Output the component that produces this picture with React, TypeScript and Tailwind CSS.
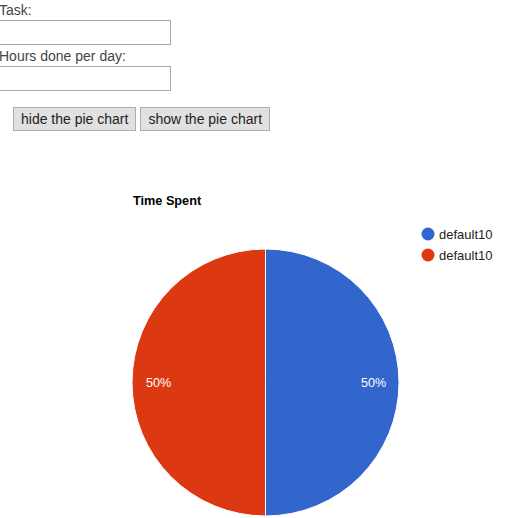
const FONT = "font-['Liberation_Sans',Arial,sans-serif]";
const SVG_FONT = "Liberation Sans, Arial, sans-serif";

function PieChart() {
  const cx = 265.5;
  const cy = 232.5;
  const r = 133.5;
  return (
    <svg width={514} height={368} className="block">
      <text x={133} y={55} fontSize={12.7} fontWeight="bold" fill="#000" fontFamily={SVG_FONT}>
        Time Spent
      </text>
      <circle cx={428} cy={84} r={6.5} fill="#3366cc" />
      <text x={439} y={89} fontSize={13} fill="#222" fontFamily={SVG_FONT}>
        default10
      </text>
      <circle cx={428} cy={105} r={6.5} fill="#dc3912" />
      <text x={439} y={110} fontSize={13} fill="#222" fontFamily={SVG_FONT}>
        default10
      </text>
      <path d={`M${cx},${cy} L${cx},${cy - r} A${r},${r} 0 0 1 ${cx},${cy + r} Z`} fill="#3366cc" stroke="#fff" strokeWidth={1} />
      <path d={`M${cx},${cy} L${cx},${cy + r} A${r},${r} 0 0 1 ${cx},${cy - r} Z`} fill="#dc3912" stroke="#fff" strokeWidth={1} />
      <text x={373.5} y={237} fontSize={12.6} fill="#fff" textAnchor="middle" fontFamily={SVG_FONT}>
        50%
      </text>
      <text x={158.5} y={237} fontSize={12.6} fill="#fff" textAnchor="middle" fontFamily={SVG_FONT}>
        50%
      </text>
    </svg>
  );
}

export default function App() {
  return (
    <div className={`${FONT} w-[514px] h-[518px] bg-white overflow-hidden text-[#222]`}>
      <div className="-ml-[1px] pt-[1px]">
        <div className="text-[14px] leading-[18px] text-[#444]">Task:</div>
        <div className="w-[172px] h-[25px] mt-[1px] border border-[#a9a9a9] bg-white" />
        <div className="text-[14px] leading-[18px] mt-[2px] text-[#444]">Hours done per day:</div>
        <div className="w-[172px] h-[25px] mt-[1px] border border-[#a9a9a9] bg-white" />
      </div>
      <div className="flex gap-[4px] pl-[13px] mt-[16px]">
        <button className="h-[24px] px-[7px] text-[14px] text-[#222] bg-[#e1e1e1] border border-[#adadad] leading-none">
          hide the pie chart
        </button>
        <button className="h-[24px] px-[7px] text-[14px] text-[#222] bg-[#e1e1e1] border border-[#adadad] leading-none">
          show the pie chart
        </button>
      </div>
      <div className="mt-[19px]">
        <PieChart />
      </div>
    </div>
  );
}
